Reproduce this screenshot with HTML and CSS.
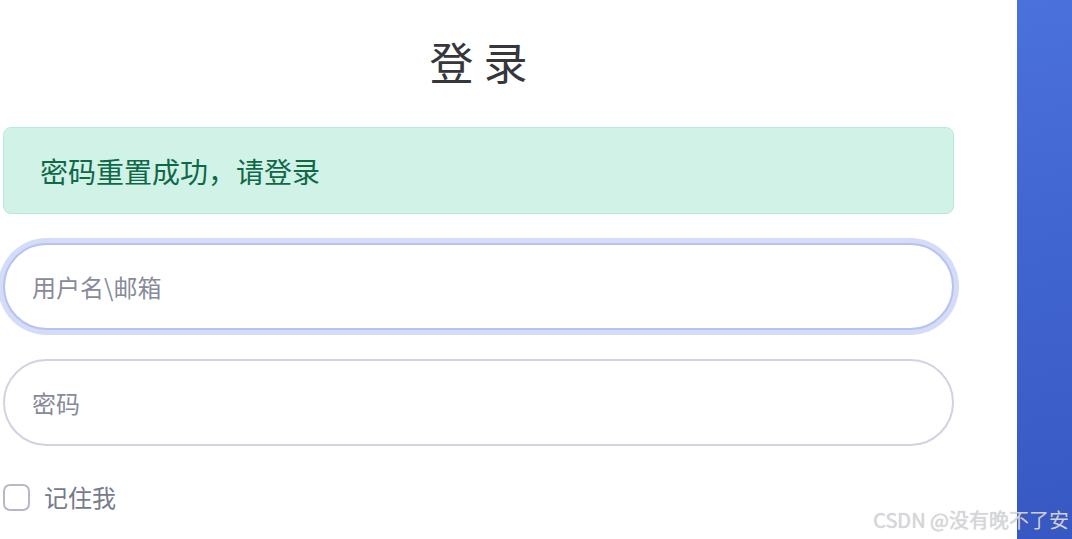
FILE: index.html
```html
<!DOCTYPE html>
<html lang="zh-CN">
<head>
<meta charset="utf-8">
<title>登录</title>
<link rel="stylesheet" href="styles.css">
</head>
<body>
<div class="page">
  <main class="form-area">
    <h1 class="title">登 录</h1>
    <div class="alert">密码重置成功，请登录</div>
    <input class="field focused" type="text" placeholder="用户名\邮箱">
    <input class="field" type="password" placeholder="密码">
    <label class="remember">
      <span class="box"></span>
      <span class="remember-text">记住我</span>
    </label>
  </main>
  <aside class="side"></aside>
</div>
<div class="watermark">CSDN @没有晚不了安</div>
</body>
</html>
```
FILE: styles.css
```css
html, body {
  margin: 0;
  padding: 0;
  background: #ffffff;
  font-family: "Noto Sans CJK SC", "Noto Sans", sans-serif;
}
.page {
  display: flex;
  height: 539px;
  overflow: hidden;
}
.form-area {
  width: 951px;
  margin-left: 3px;
  padding-top: 28px;
  display: flex;
  flex-direction: column;
}
.title {
  margin: 0 0 33px;
  height: 66px;
  line-height: 66px;
  font-size: 44px;
  font-weight: 400;
  text-align: center;
  color: #36373c;
}
.alert {
  box-sizing: border-box;
  height: 87px;
  border: 1.5px solid #b6ebd6;
  border-radius: 8px;
  background: #d1f2e7;
  color: #0f6848;
  font-size: 28px;
  display: flex;
  align-items: center;
  padding-left: 36px;
  margin-bottom: 29px;
}
.field {
  box-sizing: border-box;
  width: 100%;
  height: 87px;
  border: 2px solid #d2d2e2;
  border-radius: 44px;
  background: #fff;
  padding: 0 0 0 27px;
  font-family: inherit;
  font-size: 24px;
  color: #333;
  outline: none;
  margin: 0 0 29px;
}
.field::placeholder {
  color: #878a9a;
}
.field.focused {
  border-color: #b6c3ef;
  box-shadow: 0 0 0 5px #d4dcf7;
}
.remember {
  display: flex;
  align-items: center;
  gap: 14px;
  margin-top: 7px;
}
.box {
  box-sizing: border-box;
  width: 27px;
  height: 27px;
  border: 2px solid #b6b7cb;
  border-radius: 7px;
  background: #fff;
}
.remember-text {
  font-size: 24px;
  color: #777a8c;
  line-height: 30px;
}
.side {
  margin-left: 63px;
  flex: 1;
  background: linear-gradient(170deg, #4b71dc 0%, #4064cf 50%, #3758c3 100%);
}
.watermark {
  position: absolute;
  right: 3px;
  bottom: 5px;
  font-size: 20px;
  font-weight: 400;
  color: rgba(215, 215, 220, 0.95);
  text-shadow: 0 0 1px rgba(110, 110, 110, 0.4);
  font-family: "Noto Sans CJK SC", "Noto Sans", sans-serif;
}
```
